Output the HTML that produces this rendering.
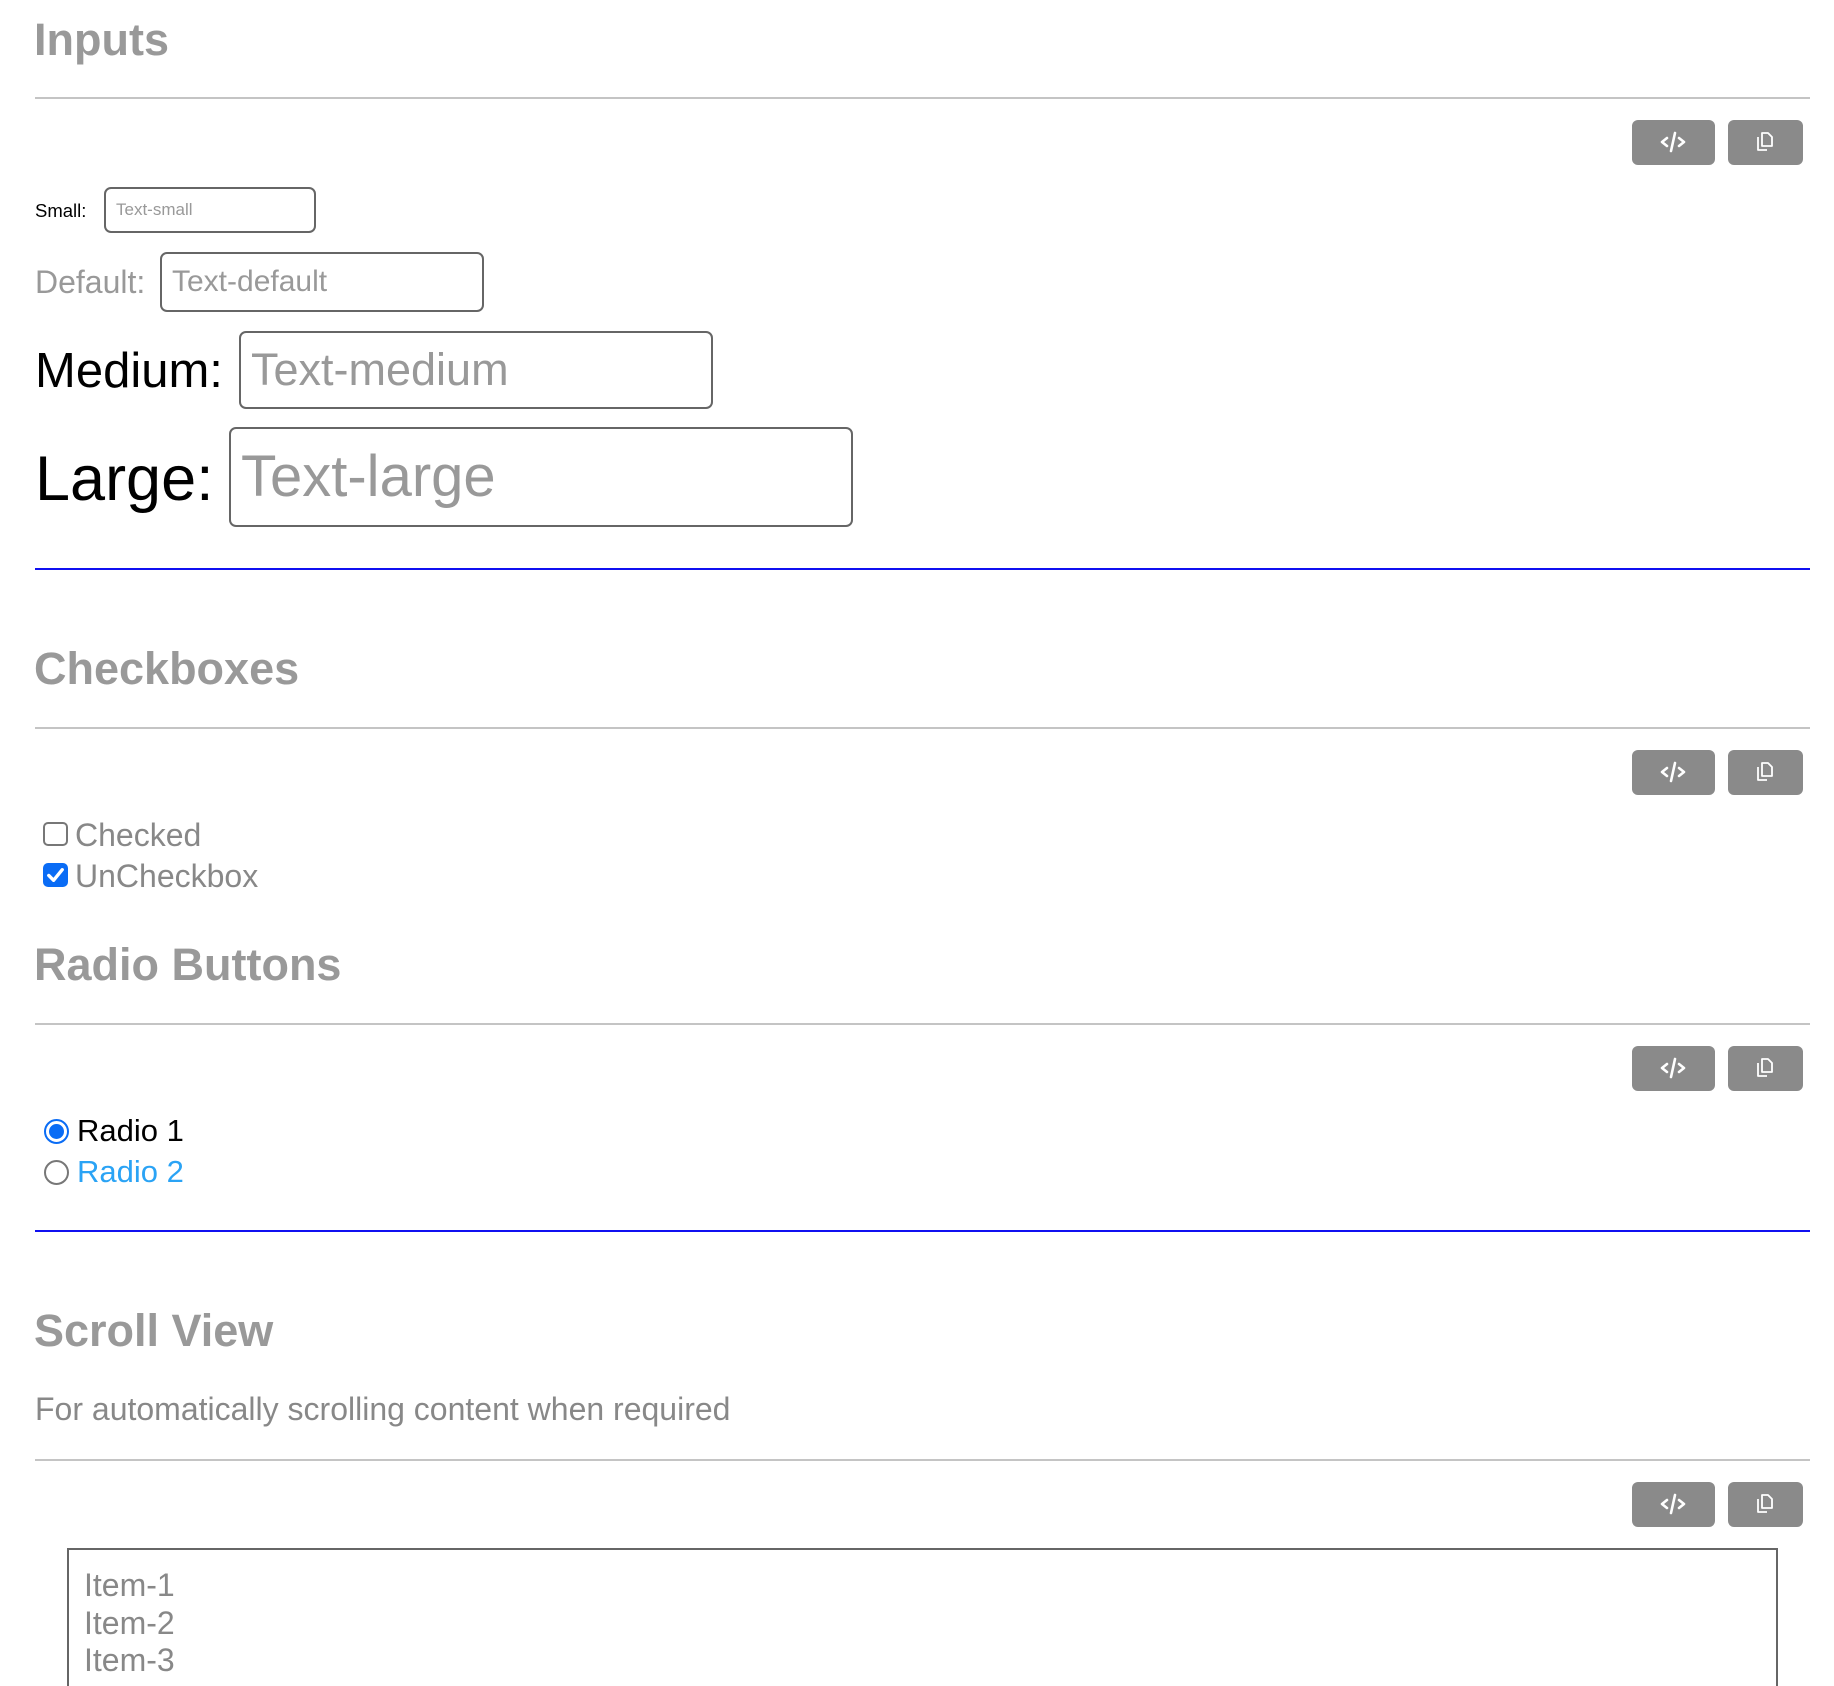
<!DOCTYPE html>
<html style="height:1686px;overflow:hidden"><head><meta charset="utf-8"><style>
body{margin:0;width:1834px;height:1686px;overflow:hidden;background:#fff;font-family:"Liberation Sans",Arial,sans-serif;position:relative}
.a{position:absolute;white-space:nowrap}
.h{font-weight:bold;color:#999;font-size:45px;height:60px;line-height:60px}
.hr{position:absolute;left:35px;width:1775px;height:2px;background:#c4c4c4}
.blue{position:absolute;left:35px;width:1775px;height:2px;background:#1010f0}
.btn{position:absolute;height:45px;background:#8a8a8a;border-radius:6px}
.inp{position:absolute;border:2px solid #666;border-radius:7px;box-sizing:border-box;color:#999}
.t{color:#888;font-size:32px;height:40px;line-height:40px}
</style></head><body>
<div class="a h" style="left:34px;top:10px">Inputs</div>
<div class="hr" style="top:97px"></div>
<div class="btn" style="left:1632px;top:120px;width:83px"></div>
<div class="btn" style="left:1728px;top:120px;width:75px"></div>

<div class="a" style="left:35px;top:199px;font-size:18.5px;line-height:24px">Small:</div>
<div class="inp" style="left:104px;top:187px;width:212px;height:46px;font-size:17px;line-height:42px;padding-left:10px">Text-small</div>

<div class="a" style="left:35px;top:262px;font-size:32px;line-height:40px;color:#999">Default:</div>
<div class="inp" style="left:160px;top:252px;width:324px;height:60px;font-size:30px;line-height:56px;padding-left:10px">Text-default</div>

<div class="a" style="left:35px;top:341px;font-size:49px;line-height:60px;color:#000">Medium:</div>
<div class="inp" style="left:239px;top:331px;width:474px;height:78px;font-size:45px;line-height:74px;padding-left:10px">Text-medium</div>

<div class="a" style="left:35px;top:441px;font-size:63px;line-height:76px;color:#000">Large:</div>
<div class="inp" style="left:229px;top:427px;width:624px;height:100px;font-size:58px;line-height:96px;padding-left:10px">Text-large</div>

<div class="blue" style="top:568px"></div>

<div class="a h" style="left:34px;top:639px">Checkboxes</div>
<div class="hr" style="top:727px"></div>
<div class="btn" style="left:1632px;top:750px;width:83px"></div>
<div class="btn" style="left:1728px;top:750px;width:75px"></div>

<div class="a" style="left:43px;top:822px;width:25px;height:24px;border:2px solid #777;border-radius:5px;box-sizing:border-box"></div>
<div class="a t" style="left:75px;top:815px">Checked</div>
<div class="a" style="left:43px;top:863px;width:25px;height:24px;background:#0a6cf5;border-radius:5px"><svg width="25" height="24" viewBox="0 0 26 25"><path d="M6 13l5 5 9-11" stroke="#fff" stroke-width="3.5" fill="none" stroke-linecap="round" stroke-linejoin="round"/></svg></div>
<div class="a t" style="left:75px;top:856px">UnCheckbox</div>

<div class="a h" style="left:34px;top:935px">Radio Buttons</div>
<div class="hr" style="top:1023px"></div>
<div class="btn" style="left:1632px;top:1046px;width:83px"></div>
<div class="btn" style="left:1728px;top:1046px;width:75px"></div>

<div class="a" style="left:44px;top:1119px;width:25px;height:25px;border:2px solid #0a6cf5;border-radius:50%;box-sizing:border-box"><div style="position:absolute;left:3px;top:3px;width:15px;height:15px;border-radius:50%;background:#0a6cf5"></div></div>
<div class="a t" style="left:77px;top:1111px;color:#000;font-size:31px">Radio 1</div>
<div class="a" style="left:44px;top:1160px;width:25px;height:25px;border:2px solid #777;border-radius:50%;box-sizing:border-box"></div>
<div class="a t" style="left:77px;top:1152px;color:#2aa3f5;font-size:31px">Radio 2</div>

<div class="blue" style="top:1230px"></div>

<div class="a h" style="left:34px;top:1301px">Scroll View</div>
<div class="a t" style="left:35px;top:1389px;font-size:32px">For automatically scrolling content when required</div>
<div class="hr" style="top:1459px"></div>
<div class="btn" style="left:1632px;top:1482px;width:83px"></div>
<div class="btn" style="left:1728px;top:1482px;width:75px"></div>

<div class="a" style="left:67px;top:1548px;width:1711px;height:200px;border:2px solid #666;box-sizing:border-box"></div>
<div class="a t" style="left:84px;top:1565px;font-size:32px">Item-1</div>
<div class="a t" style="left:84px;top:1603px;font-size:32px">Item-2</div>
<div class="a t" style="left:84px;top:1640px;font-size:32px">Item-3</div>

<svg class="a" style="left:0;top:0" width="1834" height="1686">
<defs>
<g id="c"><path d="M-6 -4l-5 4 5 4M6 -4l5 4-5 4M2 -9l-4 18" stroke="#fff" stroke-width="2.6" fill="none" stroke-linecap="round" stroke-linejoin="round"/></g>
<g id="p"><path d="M-3 -9h6l4 4v9h-10z M-7 -5v13h9" stroke="#fff" stroke-width="1.8" fill="none" stroke-linejoin="round"/></g>
</defs>
<use href="#c" x="1673" y="142"/><use href="#p" x="1765" y="142"/>
<use href="#c" x="1673" y="772"/><use href="#p" x="1765" y="772"/>
<use href="#c" x="1673" y="1068"/><use href="#p" x="1765" y="1068"/>
<use href="#c" x="1673" y="1504"/><use href="#p" x="1765" y="1504"/>
</svg>
</body></html>
